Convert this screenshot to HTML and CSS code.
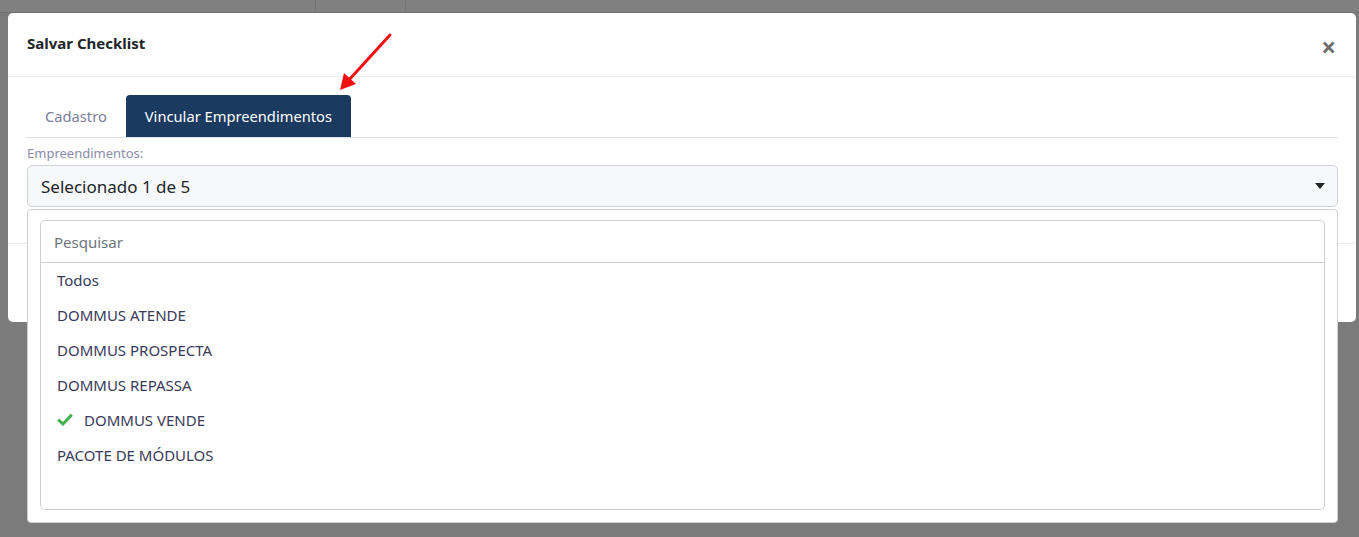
FILE: index.html
```html
<!DOCTYPE html>
<html lang="pt-BR">
<head>
<meta charset="utf-8">
<title>Salvar Checklist</title>
<link rel="stylesheet" href="styles.css">
</head>
<body>
<div class="backdrop-bar">
  <div class="bg-cell bg-cell-a"></div>
  <div class="bg-cell bg-cell-b"></div>
  <div class="bg-cell bg-cell-c"></div>
</div>
<div class="modal">
  <div class="modal-header">
    <h5 class="modal-title">Salvar Checklist</h5>
    <span class="close">&times;</span>
  </div>
  <div class="modal-body">
    <div class="tabs">
      <div class="tab">Cadastro</div>
      <div class="tab tab-active">Vincular Empreendimentos</div>
    </div>
    <div class="field">
      <div class="label">Empreendimentos:</div>
      <div class="select-wrap">
        <div class="select">
          <span>Selecionado 1 de 5</span>
          <span class="caret"></span>
        </div>
        <div class="dropdown">
          <div class="dropdown-box">
            <div class="search">Pesquisar</div>
            <ul class="options">
              <li>Todos</li>
              <li>DOMMUS ATENDE</li>
              <li>DOMMUS PROSPECTA</li>
              <li>DOMMUS REPASSA</li>
              <li class="selected"><svg class="check" viewBox="0 0 16 13" width="16" height="13"><path d="M1.2 6.6 L6 11 L14.8 1.6" fill="none" stroke="#44b152" stroke-width="3"/></svg>DOMMUS VENDE</li>
              <li>PACOTE DE MÓDULOS</li>
            </ul>
          </div>
        </div>
      </div>
    </div>
  </div>
  <div class="modal-footer"></div>
  <svg class="arrow" width="70" height="70" viewBox="0 0 70 70">
    <line x1="60" y1="6" x2="18" y2="52" stroke="#f01010" stroke-width="3" stroke-linecap="round"/>
    <polygon points="10,61 14,44 26,55" fill="#f01010"/>
  </svg>
</div>
</body>
</html>
```

FILE: styles.css
```css
* { box-sizing: border-box; }
html, body { margin: 0; padding: 0; }
body {
  background: #7b7b7b;
  font-family: "Noto Sans", "Open Sans", sans-serif;
  width: 1359px;
  height: 537px;
  overflow: hidden;
}
.backdrop-bar {
  display: flex;
  height: 13px;
  background: #808080;
  border-bottom: 1px solid #707070;
}
.bg-cell { height: 12px; }
.bg-cell-a { width: 316px; border-right: 1px solid #747474; }
.bg-cell-b { width: 90px; border-right: 1px solid #747474; }
.bg-cell-c { flex: 1; }

.modal {
  position: relative;
  margin: 0 3px 0 8px;
  background: #fff;
  border-radius: 5px;
  width: 1348px;
}
.modal-header {
  height: 64px;
  display: flex;
  align-items: center;
  justify-content: space-between;
  padding: 0 20px 0 19px;
  border-bottom: 1px solid #e9ecef;
}
.modal-title {
  margin: 0;
  font-size: 15px;
  font-weight: 700;
  color: #212529;
  position: relative;
  top: -2px;
}
.close {
  font-size: 26px;
  font-weight: 700;
  color: #6f6f6f;
  line-height: 1;
  position: relative;
  top: 2px;
}
.modal-body {
  padding: 18px 18px 36px 18px;
  border-bottom: 1px solid #e9ecef;
}
.tabs {
  display: flex;
  border-bottom: 1px solid #dee2e6;
}
.tab {
  height: 42px;
  padding: 0 19px;
  display: flex;
  align-items: center;
  font-size: 14.7px;
  color: #7b7d99;
  border-radius: 4px 4px 0 0;
}
.tab-active {
  background: #1b3a60;
  color: #fff;
  padding: 0 19px 0 19px;
}
.field { padding-left: 1px; }
.label {
  font-size: 13px;
  color: #8a8cab;
  margin: 7px 0 3px;
  line-height: 17px;
}
.select-wrap { position: relative; }
.select {
  height: 42px;
  background: #f7f8fa;
  border: 1px solid #d0d3d8;
  border-radius: 5px;
  display: flex;
  align-items: center;
  justify-content: space-between;
  padding: 0 12px 0 13px;
  font-size: 17px;
  color: #212529;
}
.caret {
  width: 0; height: 0;
  border-left: 5px solid transparent;
  border-right: 5px solid transparent;
  border-top: 6px solid #212529;
}
.dropdown {
  position: absolute;
  left: 0;
  top: 44px;
  width: 1311px;
  height: 314px;
  background: #fff;
  border: 1px solid #cfcfcf;
  border-radius: 4px;
  padding: 10px 12px 12px 12px;
  z-index: 5;
}
.dropdown-box {
  height: 290px;
  border: 1px solid #cfcfcf;
  border-radius: 5px;
}
.search {
  height: 42px;
  border-bottom: 1px solid #cfcfcf;
  display: flex;
  align-items: center;
  padding-left: 13px;
  font-size: 15px;
  color: #6c757d;
}
.options {
  list-style: none;
  margin: -1px 0 0;
  padding: 0;
}
.options li {
  height: 35px;
  display: flex;
  align-items: center;
  padding-left: 16px;
  font-size: 15px;
  color: #393a5a;
}
.check { margin-right: 11px; }
.modal-footer { height: 78px; }
.arrow {
  position: absolute;
  left: 322px;
  top: 16px;
}
```
